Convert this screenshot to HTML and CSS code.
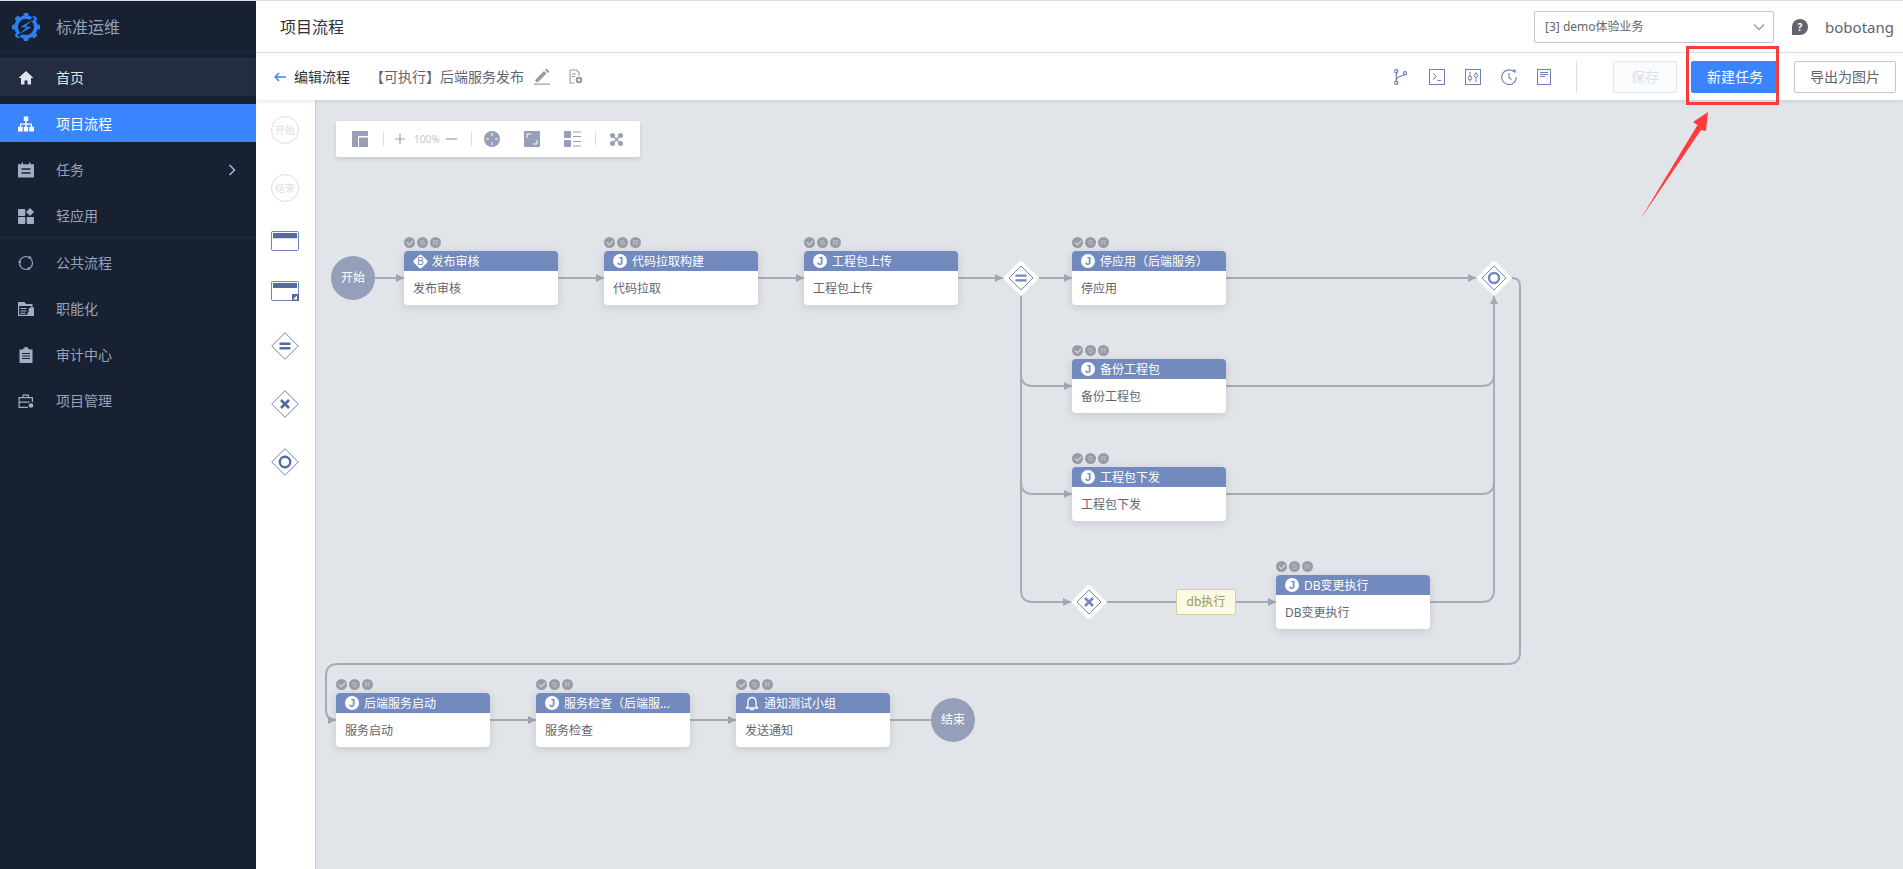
FILE: index.html
```html
<!DOCTYPE html>
<html lang="zh-CN">
<head>
<meta charset="UTF-8">
<title>项目流程</title>
<link rel="stylesheet" href="styles.css">
</head>
<body>

<svg class="defs" width="0" height="0">
<defs>
<marker id="tip" markerUnits="userSpaceOnUse" markerWidth="8" markerHeight="10" refX="8" refY="5" orient="auto">
<path d="M0 1L8 5L0 9Z" fill="#a3a6b1"/>
</marker>
<symbol id="gw-base" viewBox="0 0 36 36">
<path d="M18 1Q19 1 20 2L34 16Q36 18 34 20L20 34Q18 36 16 34L2 20Q0 18 2 16L16 2Q17 1 18 1Z" fill="#fff"/>
<path d="M18 6L30 18L18 30L6 18Z" fill="none" stroke="#7388c0" stroke-width="1"/>
</symbol>
</defs>
</svg>

<div class="app">

<div class="side">
<div class="brand">
<svg class="logo" width="28" height="28" viewBox="0 0 28 28"><g fill="#2b7ff0"><rect x="11.500" y="0" width="5" height="5" rx="1"/><rect x="11.500" y="23" width="5" height="5" rx="1"/><rect x="0" y="11.500" width="5" height="5" rx="1"/><rect x="23" y="11.500" width="5" height="5" rx="1"/><rect x="11.500" y="0" width="5" height="5" rx="1" transform="rotate(45 14 14)"/><rect x="11.500" y="23" width="5" height="5" rx="1" transform="rotate(45 14 14)"/><rect x="0" y="11.500" width="5" height="5" rx="1" transform="rotate(45 14 14)"/><rect x="23" y="11.500" width="5" height="5" rx="1" transform="rotate(45 14 14)"/></g><circle cx="14" cy="14" r="9.800" fill="#182132" stroke="#2b7ff0" stroke-width="3.600"/><path d="M22 5L9 13.500L15 14.500L6 23L19 14.500L13 13.500Z" fill="#182132" stroke="#182132" stroke-width="2"/><path d="M21 6.500L8.500 14L14.500 14.500L7 21.500L19.500 14L13.500 13.500Z" fill="#2b7ff0"/></svg>
<span>标准运维</span>
</div>
<ul class="menu">
<li class="home"><svg class="ico" viewBox="0 0 16 16"><path d="M8 1L0.500 8H3v6.500h3.500v-4h3v4H13V8h2.500z"/></svg>首页</li>
<li class="active"><svg class="ico" viewBox="0 0 16 16"><path d="M5.800 .5h4.400v4.400H8.700v2.600H14v3.300h2v4.700h-4.700v-4.700h1.500V8.700H8.700v2.100h1.500v4.700H5.800v-4.700h1.500V8.700H3.200v2.100h1.500v4.700H0v-4.700h2V7.500h5.300V4.900H5.800z"/></svg>项目流程</li>
<li class="more"><svg class="ico" viewBox="0 0 16 16"><path d="M3.500 .5h1.500v1.800h6V.5h1.500v1.800H16V15.500H0V2.300h3.500zM3.500 6.300v1.400h9V6.300zm0 4v1.400h9V10.300z" fill-rule="evenodd"/></svg>任务<svg class="chev" width="8" height="12" viewBox="0 0 8 12"><path d="M1.500 1l5 5-5 5" fill="none" stroke="#aab4c8" stroke-width="1.600"/></svg></li>
<li><svg class="ico" viewBox="0 0 16 16"><rect x="0" y="1" width="7.300" height="7" rx="1"/><path d="M12 0l4 4-4 4-4-4z"/><rect x="0" y="9" width="7.300" height="7" rx="1"/><rect x="8.700" y="9" width="7.300" height="7" rx="1"/></svg>轻应用</li>
<li class="split"><svg class="ico" viewBox="0 0 16 16"><circle cx="8" cy="8" r="6.500" fill="none" stroke="currentColor" stroke-width="1.200"/><circle cx="1.800" cy="7" r="1.400"/><circle cx="11.800" cy="2.700" r="1.400"/><circle cx="10.800" cy="13.700" r="1.400"/></svg>公共流程</li>
<li><svg class="ico" viewBox="0 0 16 16"><path d="M0 1h6.500L8 3h6.500v3.500H16V15H0zM1.200 5v8.800H9.500V13q0-2 1.500-2.500A2.500 2.500 0 0 1 13.300 6.500V5zM2.500 7h6v1h-6zm0 2.500h6v1h-6zm0 2.200h5v1h-5z" fill-rule="evenodd"/><circle cx="13" cy="9.500" r="2"/><path d="M10.500 15q0-3.500 2.500-3.500t3 3.500z"/></svg>职能化</li>
<li><svg class="ico" viewBox="0 0 16 16"><path d="M5 1.500h1.500V0h3v1.500H11v1h3.500V16h-13V2.500H5zM4 6v1h8V6zm0 2.500v1h8v-1zm0 2.500v1h8v-1z" fill-rule="evenodd"/></svg>审计中心</li>
<li><svg class="ico" viewBox="0 0 16 16"><path d="M4.500 1.500h6.500v2.500h4v5h-1.200V5.200H1.700v3.300h9.800v1.200H1.700v4.100h8.300V15H.5V4h4zm1.200 1.200V4h4.100V2.700z" fill-rule="evenodd"/><circle cx="13" cy="12.500" r="2.300"/></svg>项目管理</li>
</ul>
</div>

<div class="main">

<div class="head">
<div class="head-title">项目流程</div>
<div class="biz">[3] demo体验业务<svg width="12" height="8" viewBox="0 0 12 8"><path d="M1 1.500l5 5 5-5" fill="none" stroke="#979ba5" stroke-width="1.300"/></svg></div>
<svg class="help" width="16" height="16" viewBox="0 0 16 16"><path d="M8 0a8 8 0 1 1 0 16H0V8a8 8 0 0 1 8-8z" fill="#63656e"/><text x="8" y="12" text-anchor="middle" class="help-q">?</text></svg>
<div class="user">bobotang</div>
</div>

<div class="subbar">
<svg class="back" width="12" height="10" viewBox="0 0 12 10"><path d="M5 1L1.200 5L5 9M1.500 5H12" fill="none" stroke="#3a84ff" stroke-width="1.500"/></svg>
<span class="sub-title">编辑流程</span>
<span class="tpl-name">【可执行】后端服务发布</span>
<svg class="pen" width="16" height="16" viewBox="0 0 16 16"><path d="M1 11l8.500-8.500 2.500 2.500L3.500 13.500H1zM10.500 1.500L12 0l3 3-1.500 1.500z" fill="#979ba5" transform="translate(.500 -.500)"/><rect y="14.500" width="16" height="1.200" fill="#979ba5"/></svg>
<svg class="doc" width="14" height="15" viewBox="0 0 14 15"><path d="M1 1h6.500L10 3.500V7M5.500 14H1V1" fill="none" stroke="#979ba5" stroke-width="1.100"/><path d="M3 5h4M3 7.500h3" stroke="#979ba5"/><circle cx="10" cy="11" r="3.300" fill="#979ba5"/><circle cx="10" cy="11" r="1.200" fill="#fff"/></svg>
<div class="tools">
<svg width="13" height="16" viewBox="0 0 13 16"><g fill="none" stroke="#6d7fb3" stroke-width="1.200"><circle cx="2.300" cy="2.300" r="1.600"/><circle cx="2.300" cy="13.700" r="1.600"/><circle cx="11" cy="4.300" r="1.600"/><path d="M2.300 4v8M2.300 11.500Q2.500 8.500 6 7.500T10 5.500"/></g></svg>
<svg width="16" height="16" viewBox="0 0 16 16"><g fill="none" stroke="#6d7fb3"><rect x=".5" y=".5" width="15" height="15"/><path d="M4 4.500l3.500 3-3.500 3M8.500 11.500h3.500"/></g></svg>
<svg width="16" height="16" viewBox="0 0 16 16"><g fill="none" stroke="#6d7fb3"><rect x=".5" y=".5" width="15" height="15"/><path d="M5 3v4M5 11v2M11 3v1.500M11 8.500v4.500"/><circle cx="5" cy="9" r="1.800"/><circle cx="11" cy="6.500" r="1.800"/></g></svg>
<svg width="16" height="16" viewBox="0 0 16 16"><g fill="none" stroke="#6d7fb3" stroke-width="1.100"><path d="M12.500 2.500A7.300 7.300 0 1 0 15.300 8"/><path d="M8 4v4.500l2.500 2"/></g><path d="M11.500 .5l3.500.5-1 3.500z" fill="#6d7fb3"/></svg>
<svg width="14" height="16" viewBox="0 0 14 16"><g fill="none" stroke="#6d7fb3"><rect x=".5" y=".5" width="13" height="15"/><path d="M3 3.500h8M3 5.500h8M3 7.500h5" stroke-width="1.200"/></g></svg>
</div>
<div class="bar-split"></div>
<button class="btn btn-off">保存</button>
<button class="btn btn-main">新建任务</button>
<button class="btn btn-line">导出为图片</button>
</div>

<div class="work">

<div class="palette">
<div class="pal-node">开始</div>
<div class="pal-node pal-end">结束</div>
<svg width="28" height="20" viewBox="0 0 28 20"><rect x=".5" y=".5" width="27" height="19" rx="1" fill="#fff" stroke="#6f83bb"/><rect x="2" y="2" width="24" height="5" fill="#566aa0"/><rect x="2" y="7" width="24" height="1" fill="#d3d7e2"/></svg>
<svg class="pal-sub" width="28" height="20" viewBox="0 0 28 20"><rect x=".5" y=".5" width="27" height="19" rx="1" fill="#fff" stroke="#6f83bb"/><rect x="2" y="2" width="24" height="5" fill="#566aa0"/><rect x="21" y="13" width="7" height="7" fill="#566aa0"/><path d="M22 18.500l4-4v4z" fill="#fff"/></svg>
<svg width="28" height="28" viewBox="0 0 28 28"><path d="M14 .700L27.300 14 14 27.300 .700 14z" fill="#fff" stroke="#6f83bb"/><path d="M8.500 10.500h11v2.500h-11zM8.500 15h11v2.500h-11z" fill="#566aa0"/></svg>
<svg width="28" height="28" viewBox="0 0 28 28"><path d="M14 .700L27.300 14 14 27.300 .700 14z" fill="#fff" stroke="#6f83bb"/><path d="M10 10l8 8M18 10l-8 8" stroke="#566aa0" stroke-width="2.600"/></svg>
<svg width="28" height="28" viewBox="0 0 28 28"><path d="M14 .700L27.300 14 14 27.300 .700 14z" fill="#fff" stroke="#6f83bb"/><circle cx="14" cy="14" r="5.200" fill="none" stroke="#566aa0" stroke-width="2.400"/></svg>
</div>

<div class="canvas">

<div class="toolbar">
<svg width="16" height="16" viewBox="0 0 16 16"><path d="M0 0h16v5H6v11H0zM7 6.500h9V16H7z" fill="#979fb8"/></svg>
<span class="tb-split tb-a"></span>
<svg class="tb-plus" width="10" height="10" viewBox="0 0 10 10"><path d="M5 0v10M0 5h10" stroke="#979fb8" stroke-width="1.200"/></svg>
<span class="tb-pct">100%</span>
<svg class="tb-minus" width="11" height="10" viewBox="0 0 11 10"><path d="M0 5h11" stroke="#979fb8" stroke-width="1.200"/></svg>
<span class="tb-split tb-b"></span>
<svg class="tb-gap" width="16" height="16" viewBox="0 0 16 16"><circle cx="8" cy="8" r="8" fill="#979fb8"/><path d="M8 2v3M8 11v3M2 8h3M11 8h3" stroke="#fff"/></svg>
<svg class="tb-gap" width="16" height="16" viewBox="0 0 16 16"><rect width="16" height="16" rx="1" fill="#979fb8"/><path d="M3 7V3h4M13 9v4H9" fill="none" stroke="#fff"/></svg>
<svg width="17" height="16" viewBox="0 0 17 16"><rect width="7" height="7" rx="1" fill="#979fb8"/><rect y="9" width="7" height="7" rx="1" fill="#979fb8"/><path d="M9 1h8M9 5.500h8M9 10.500h8M9 15h8" stroke="#979fb8" stroke-width="1.200"/></svg>
<span class="tb-split tb-c"></span>
<svg width="13" height="13" viewBox="0 0 13 13"><circle cx="2.500" cy="2.500" r="2.500" fill="#979fb8"/><circle cx="10.500" cy="2.500" r="2.500" fill="#979fb8"/><circle cx="2.500" cy="10.500" r="2.500" fill="#979fb8"/><circle cx="10.500" cy="10.500" r="2.500" fill="#979fb8"/><path d="M2.500 2.500l8 8M10.500 2.500l-8 8" stroke="#979fb8" stroke-width="1.500"/></svg>
</div>

<svg class="edges" width="1587" height="769">
<g fill="none" stroke="#a9acb6" stroke-width="2">
<path d="M59 178H88" marker-end="url(#tip)"/>
<path d="M242 178H288" marker-end="url(#tip)"/>
<path d="M442 178H488" marker-end="url(#tip)"/>
<path d="M642 178H687" marker-end="url(#tip)"/>
<path d="M723 178H756" marker-end="url(#tip)"/>
<path d="M910 178H1160" marker-end="url(#tip)"/>
<path d="M705 196V274Q705 286 717 286H756" marker-end="url(#tip)"/>
<path d="M705 196V382Q705 394 717 394H756" marker-end="url(#tip)"/>
<path d="M705 196V490Q705 502 717 502H755" marker-end="url(#tip)"/>
<path d="M791 502H960" marker-end="url(#tip)"/>
<path d="M910 286H1166Q1178 286 1178 274V196" marker-end="url(#tip)"/>
<path d="M910 394H1166Q1178 394 1178 382V196"/>
<path d="M1114 502H1166Q1178 502 1178 490V196"/>
<path d="M1196 178H1196Q1204 178 1204 186V552Q1204 564 1192 564H22Q10 564 10 576V610Q10 620 20 620" marker-end="url(#tip)"/>
<path d="M174 620H220" marker-end="url(#tip)"/>
<path d="M374 620H420" marker-end="url(#tip)"/>
<path d="M574 620H615"/>
</g>
</svg>

<div class="circle c-begin">开始</div>
<div class="circle c-end">结束</div>

<svg class="gateway g-split" width="36" height="36" viewBox="0 0 36 36"><use href="#gw-base"/><path d="M12.500 14.500h11v2.200h-11zM12.500 19.300h11v2.200h-11z" fill="#7388c0"/></svg>
<svg class="gateway g-join" width="36" height="36" viewBox="0 0 36 36"><use href="#gw-base"/><circle cx="18" cy="18" r="5" fill="none" stroke="#7388c0" stroke-width="2.400"/></svg>
<svg class="gateway g-cond" width="36" height="36" viewBox="0 0 36 36"><use href="#gw-base"/><path d="M14 14l8 8M22 14l-8 8" stroke="#7388c0" stroke-width="2.600"/></svg>

<div class="cond-label">db执行</div>

<div class="node n-review">
<div class="opts"><i class="ok"></i><i>S</i><i>R</i></div>
<div class="node-head"><span class="kind kind-b"><b>B</b></span><span class="node-name">发布审核</span></div>
<div class="node-body">发布审核</div>
</div>
<div class="node n-pull">
<div class="opts"><i class="ok"></i><i>S</i><i>R</i></div>
<div class="node-head"><span class="kind">J</span><span class="node-name">代码拉取构建</span></div>
<div class="node-body">代码拉取</div>
</div>
<div class="node n-upload">
<div class="opts"><i class="ok"></i><i>S</i><i>R</i></div>
<div class="node-head"><span class="kind">J</span><span class="node-name">工程包上传</span></div>
<div class="node-body">工程包上传</div>
</div>
<div class="node n-stop">
<div class="opts"><i class="ok"></i><i>S</i><i>R</i></div>
<div class="node-head"><span class="kind">J</span><span class="node-name">停应用（后端服务）</span></div>
<div class="node-body">停应用</div>
</div>
<div class="node n-backup">
<div class="opts"><i class="ok"></i><i>S</i><i>R</i></div>
<div class="node-head"><span class="kind">J</span><span class="node-name">备份工程包</span></div>
<div class="node-body">备份工程包</div>
</div>
<div class="node n-dist">
<div class="opts"><i class="ok"></i><i>S</i><i>R</i></div>
<div class="node-head"><span class="kind">J</span><span class="node-name">工程包下发</span></div>
<div class="node-body">工程包下发</div>
</div>
<div class="node n-db">
<div class="opts"><i class="ok"></i><i>S</i><i>R</i></div>
<div class="node-head"><span class="kind">J</span><span class="node-name">DB变更执行</span></div>
<div class="node-body">DB变更执行</div>
</div>
<div class="node n-start">
<div class="opts"><i class="ok"></i><i>S</i><i>R</i></div>
<div class="node-head"><span class="kind">J</span><span class="node-name">后端服务启动</span></div>
<div class="node-body">服务启动</div>
</div>
<div class="node n-check">
<div class="opts"><i class="ok"></i><i>S</i><i>R</i></div>
<div class="node-head"><span class="kind">J</span><span class="node-name">服务检查（后端服...</span></div>
<div class="node-body">服务检查</div>
</div>
<div class="node n-notify">
<div class="opts"><i class="ok"></i><i>S</i><i>R</i></div>
<div class="node-head"><svg class="bell" width="14" height="15" viewBox="0 0 14 15"><path d="M7 1.500Q3 1.500 3 6V10L1.500 12H12.500L11 10V6Q11 1.500 7 1.500Z" fill="none" stroke="#fff" stroke-width="1.300"/><path d="M5 13.500h4" stroke="#fff" stroke-width="1.300"/></svg><span class="node-name">通知测试小组</span></div>
<div class="node-body">发送通知</div>
</div>

</div>
</div>
</div>
</div>

<!-- red callout drawn over the screenshot -->
<div class="mark-box"></div>
<svg class="mark-arrow" width="1903" height="869"><polygon points="1708,112 1693,122 1697.500,125 1640.500,219 1701,130 1706,131" fill="#ff3b3b"/></svg>

</body>
</html>
```

FILE: styles.css
```css
*{
margin: 0;
padding: 0;
box-sizing: border-box;
list-style: none;
}

html,body{
height: 100%;
overflow: hidden;
}

body{
padding-top: 1px;
background: #dcdee5;
font-family: "Noto Sans", "Noto Sans CJK SC", sans-serif;
font-size: 14px;
color: #63656e;
position: relative;
}

.defs{
position: absolute;
}

.app{
display: flex;
height: 100%;
}

/* sidebar */
.side{
width: 256px;
flex: none;
background: #182132;
color: #96a2b9;
}

.brand{
height: 52px;
display: flex;
align-items: center;
padding-left: 12px;
gap: 16px;
border-bottom: 1px solid #222b3d;
font-size: 16px;
line-height: 24px;
}

.menu{
padding-top: 5px;
}

.menu li{
height: 38px;
margin-bottom: 8px;
display: flex;
align-items: center;
padding-left: 18px;
gap: 22px;
line-height: 22px;
padding-top: 1px;
position: relative;
}

.ico{
width: 16px;
height: 16px;
fill: #a3aec6;
flex: none;
}

.menu li:nth-child(5) .ico{
fill: #8d9ab8;
}

.menu .home{
background: #232c40;
color: #dfe3ec;
}

.menu .home .ico{
fill: #dfe3ec;
}

.menu .active{
background: #3a84ff;
color: #fff;
}

.menu .active .ico{
fill: #fff;
}

.chev{
margin-left: auto;
margin-right: 20px;
}

.menu .split{
margin-top: 9px;
}

.menu .split::before{
content: "";
position: absolute;
left: 0;
right: 0;
top: -6px;
height: 1px;
background: #222b3d;
}

/* top bars */
.main{
flex: 1;
min-width: 0;
display: flex;
flex-direction: column;
}

.head{
height: 52px;
flex: none;
background: #fff;
border-bottom: 1px solid #dcdee5;
display: flex;
align-items: center;
padding-left: 24px;
}

.head-title{
font-size: 16px;
line-height: 24px;
color: #313238;
}

.biz{
margin-left: auto;
width: 240px;
height: 32px;
border: 1px solid #c4c6cc;
border-radius: 2px;
display: flex;
align-items: center;
justify-content: space-between;
padding: 0 8px 0 10px;
font-size: 12px;
line-height: 18px;
}

.help{
margin-left: 18px;
}

.help-q{
font-size: 10px;
font-weight: 700;
fill: #fff;
}

.user{
margin-left: 17px;
margin-right: 9px;
line-height: 20px;
color: #63656e;
font-size: 15px;
}

.subbar{
height: 47px;
flex: none;
background: #fff;
display: flex;
align-items: center;
padding: 0 7px 0 18px;
box-shadow: 0 2px 3px rgba(0,0,0,.08);
position: relative;
z-index: 2;
}

.sub-title{
margin-left: 8px;
color: #313238;
line-height: 20px;
font-size: 14px;
}

.tpl-name{
margin-left: 20px;
line-height: 20px;
font-size: 14px;
}

.pen{
margin-left: 10px;
}

.doc{
margin-left: 19px;
}

.tools{
margin-left: auto;
display: flex;
align-items: center;
gap: 20px;
}

.tools svg:first-child{
margin-right: 2px;
}

.bar-split{
width: 1px;
height: 32px;
background: #dcdee5;
margin: 0 36px 0 25px;
}

.btn{
height: 32px;
border: 1px solid #c4c6cc;
border-radius: 2px;
background: #fff;
font: 14px/20px "Noto Sans", "Noto Sans CJK SC", sans-serif;
color: #63656e;
}

.btn-off{
width: 64px;
background: #fafbfd;
border-color: #e4e5ea;
color: #dcdee5;
}

.btn-main{
width: 88px;
margin-left: 14px;
background: #3a84ff;
border-color: #3a84ff;
color: #fff;
}

.btn-line{
width: 102px;
margin-left: 15px;
}

/* palette */
.work{
flex: 1;
display: flex;
min-height: 0;
}

.palette{
width: 60px;
flex: none;
background: #fff;
border-right: 1px solid #c8cad2;
display: flex;
flex-direction: column;
align-items: center;
padding-right: 1px;
padding-top: 16px;
}

.palette > *{
flex: none;
}

.pal-node{
width: 28px;
height: 28px;
border: 1px solid #dcdee5;
border-radius: 50%;
font-size: 10px;
line-height: 26px;
text-align: center;
color: #dcdee5;
margin-bottom: 30px;
}

.palette .pal-end{
margin-bottom: 29px;
}

.palette svg{
margin-bottom: 30px;
}

.palette .pal-sub{
margin-bottom: 31px;
}

/* canvas */
.canvas{
flex: 1;
position: relative;
background: #e1e4e9;
overflow: hidden;
}

.toolbar{
position: absolute;
left: 20px;
top: 21px;
width: 304px;
height: 36px;
background: #fff;
border-radius: 2px;
box-shadow: 0 2px 4px rgba(0,0,0,.12);
display: flex;
align-items: center;
padding-left: 16px;
}

.toolbar svg{
flex: none;
}

.tb-split{
width: 1px;
height: 14px;
background: #dcdee5;
flex: none;
}

.tb-a{
margin: 0 11px 0 15px;
}

.tb-pct{
font-size: 10px;
line-height: 14px;
color: #c4c6cc;
margin: 0 7px 0 9px;
width: 25px;
text-align: center;
}

.tb-b{
margin: 0 12px 0 14px;
}

.toolbar .tb-gap{
margin-right: 24px;
}

.tb-c{
margin: 0 14px 0 14px;
}

.edges{
position: absolute;
left: 0;
top: 0;
}

.circle{
position: absolute;
width: 44px;
height: 44px;
border-radius: 50%;
background: #959fba;
color: #fff;
font-size: 12px;
line-height: 44px;
text-align: center;
}

.c-begin{
left: 15px;
top: 156px;
}

.c-end{
left: 615px;
top: 598px;
}

.gateway{
position: absolute;
}

.g-split{
left: 687px;
top: 160px;
}

.g-join{
left: 1160px;
top: 160px;
}

.g-cond{
left: 755px;
top: 484px;
}

.cond-label{
position: absolute;
left: 860px;
top: 489px;
width: 60px;
height: 26px;
background: #fcfae2;
border: 1px solid #d6cf9a;
border-radius: 2px;
font-size: 12px;
line-height: 24px;
text-align: center;
color: #a09458;
}

/* task nodes */
.node{
position: absolute;
width: 154px;
height: 54px;
border-radius: 4px;
background: #fff;
box-shadow: 0 2px 10px rgba(0,0,0,.13);
font-size: 12px;
}

.n-review{ left: 88px; top: 151px; }
.n-pull{ left: 288px; top: 151px; }
.n-upload{ left: 488px; top: 151px; }
.n-stop{ left: 756px; top: 151px; }
.n-backup{ left: 756px; top: 259px; }
.n-dist{ left: 756px; top: 367px; }
.n-db{ left: 960px; top: 475px; }
.n-start{ left: 20px; top: 593px; }
.n-check{ left: 220px; top: 593px; }
.n-notify{ left: 420px; top: 593px; }

.opts{
position: absolute;
left: 0;
top: -14px;
display: flex;
gap: 2px;
}

.opts i{
width: 11px;
height: 11px;
border-radius: 50%;
background: #979ba5;
color: #c4c6cc;
font-style: normal;
font-size: 8px;
line-height: 11px;
text-align: center;
font-family: "Liberation Sans", sans-serif;
}

.opts .ok{
position: relative;
}

.opts .ok::after{
content: "";
position: absolute;
left: 3px;
top: 2.500px;
width: 5px;
height: 3px;
border-left: 1px solid #dcdee5;
border-bottom: 1px solid #dcdee5;
transform: rotate(-45deg);
}

.node-head{
height: 20px;
background: #738abe;
border-radius: 4px 4px 0 0;
color: #fff;
display: flex;
align-items: center;
padding-left: 9px;
}

.kind{
width: 14px;
height: 14px;
flex: none;
border-radius: 50%;
background: #fff;
color: #738abe;
font: 700 11px/14px "Liberation Sans", sans-serif;
text-align: center;
margin-right: 5px;
}

.kind-b{
border-radius: 2px;
transform: rotate(45deg);
width: 11px;
height: 11px;
margin: 0 6px 0 1.500px;
}

.kind-b b{
display: block;
transform: rotate(-45deg);
font-weight: 400;
font-size: 10px;
line-height: 11px;
}

.bell{
flex: none;
margin-right: 5px;
}

.node-name{
line-height: 20px;
padding-top: 1px;
white-space: nowrap;
}

.node-body{
height: 34px;
padding: 2px 0 0 9px;
line-height: 32px;
}

/* callout */
.mark-box{
position: absolute;
left: 1686px;
top: 46px;
width: 93px;
height: 59px;
border: 3px solid #fb3a3a;
z-index: 3;
}

.mark-arrow{
position: absolute;
left: 0;
top: 0;
pointer-events: none;
z-index: 3;
}
```
